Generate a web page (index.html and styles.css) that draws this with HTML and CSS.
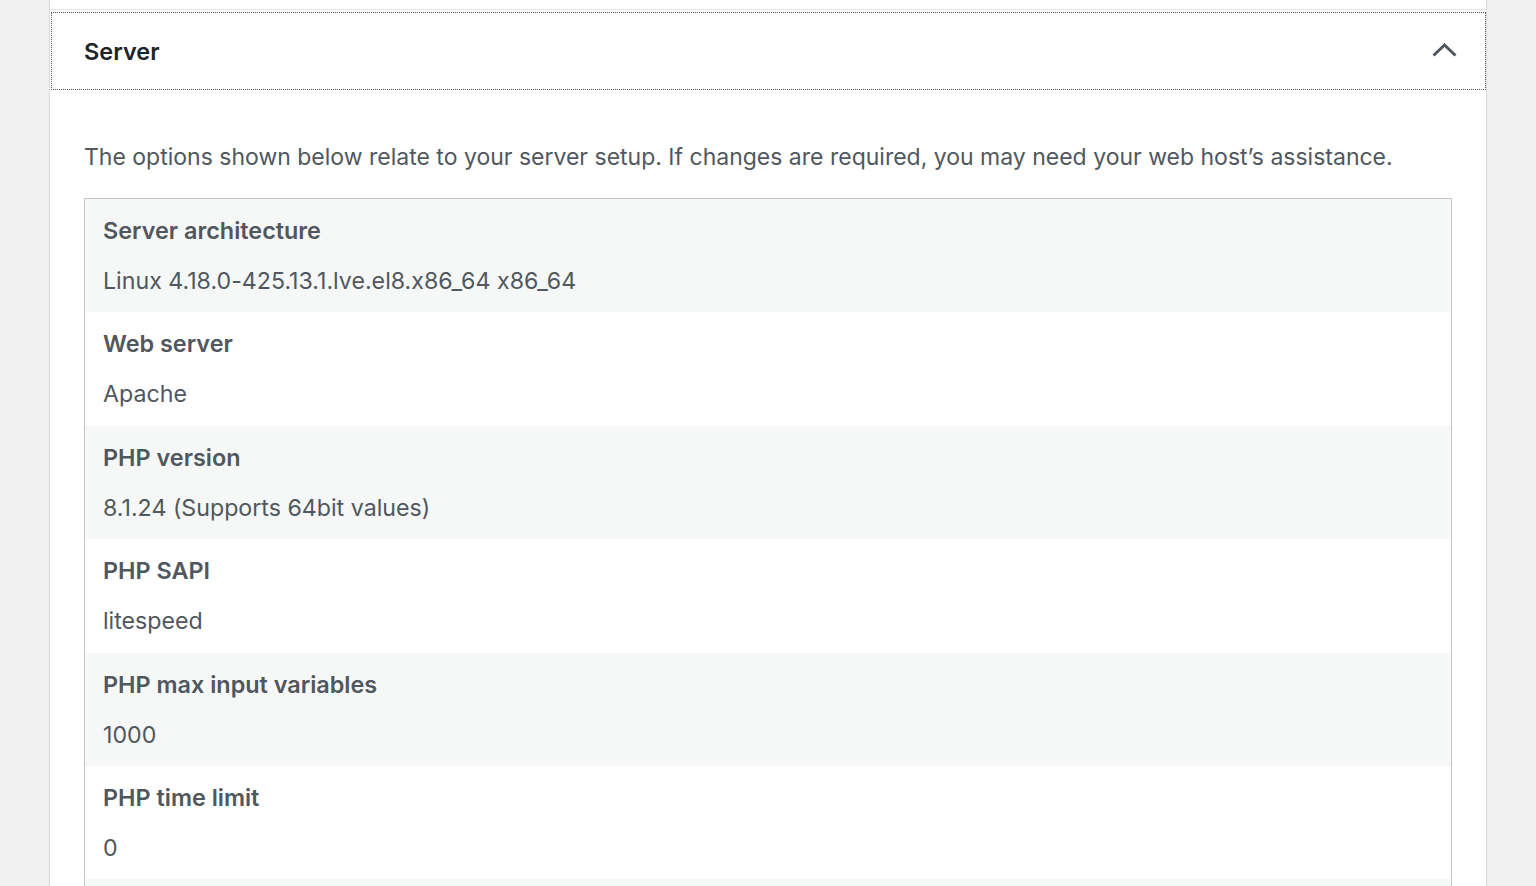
FILE: index.html
```html
<!DOCTYPE html>
<html lang="en">

<head>
    <meta charset="UTF-8">
    <meta name="viewport" content="width=device-width, initial-scale=1.0">
    <title>Site Health Info</title>
    <link rel="stylesheet" href="styles.css">
</head>

<body>
    <div class="health-panel">
        <div class="prev-item"></div>

        <h3 class="accordion-heading">
            <button class="accordion-trigger" aria-expanded="true">
                <span class="title">Server</span>
                <svg class="chevron" width="25" height="16" viewBox="0 0 25 16">
                    <path d="M1.5 13.5 L12.5 3 L23.5 13.5" fill="none" stroke="#50575e" stroke-width="3"></path>
                </svg>
            </button>
        </h3>

        <div class="accordion-panel">
            <p class="description">The options shown below relate to your server setup. If changes are required, you may need your web host’s assistance.</p>

            <div class="info-table">
                <div class="info-row">
                    <div class="info-label">Server architecture</div>
                    <div class="info-value">Linux 4.18.0-425.13.1.lve.el8.x86_64 x86_64</div>
                </div>
                <div class="info-row">
                    <div class="info-label">Web server</div>
                    <div class="info-value">Apache</div>
                </div>
                <div class="info-row">
                    <div class="info-label">PHP version</div>
                    <div class="info-value">8.1.24 (Supports 64bit values)</div>
                </div>
                <div class="info-row">
                    <div class="info-label">PHP SAPI</div>
                    <div class="info-value">litespeed</div>
                </div>
                <div class="info-row">
                    <div class="info-label">PHP max input variables</div>
                    <div class="info-value">1000</div>
                </div>
                <div class="info-row">
                    <div class="info-label">PHP time limit</div>
                    <div class="info-value">0</div>
                </div>
                <div class="info-row"></div>
            </div>
        </div>
    </div>
</body>

</html>
```

FILE: styles.css
```css
* {
    box-sizing: border-box;
}

body {
    margin: 0;
    background: #f0f0f1;
    font-family: Inter, "Liberation Sans", sans-serif;
    font-feature-settings: "calt" 0;
    color: #50575e;
    overflow: hidden;
}

.health-panel {
    margin-left: 49px;
    width: 1438px;
    min-height: 1000px;
    background: #fff;
    border-left: 1px solid #dcdcde;
    border-right: 1px solid #dcdcde;
}

.prev-item {
    height: 10px;
    border-bottom: 1px solid #e4e4e6;
}

.accordion-heading {
    margin: 2px 0 0 1px;
    font-size: 1em;
}

.accordion-trigger {
    display: flex;
    align-items: center;
    justify-content: space-between;
    width: 1435px;
    height: 78px;
    padding: 0 29px 0 33px;
    background: #fff;
    border: 0;
    outline: 1px dotted #50575e;
    outline-offset: -1px;
    font-family: inherit;
    font-feature-settings: "calt" 0;
    cursor: pointer;
}

.title {
    font-size: 23.5px;
    font-weight: 600;
    color: #1d2327;
}

.chevron {
    display: block;
    margin-top: -3px;
}

.accordion-panel {
    padding: 0 34px;
}

.description {
    margin: 52px 0 26px;
    font-size: 23px;
    line-height: 30px;
}

.info-table {
    border: 1px solid #c3c4c7;
    border-bottom: 0;
}

.info-row {
    padding: 0 18px;
    height: 113.4px;
}

.info-row:nth-child(odd) {
    background: #f6f7f7;
}

.info-label {
    padding-top: 17px;
    font-size: 23.4px;
    line-height: 30px;
    font-weight: 600;
}

.info-value {
    margin-top: 20px;
    font-size: 23.2px;
    line-height: 30px;
}
```
